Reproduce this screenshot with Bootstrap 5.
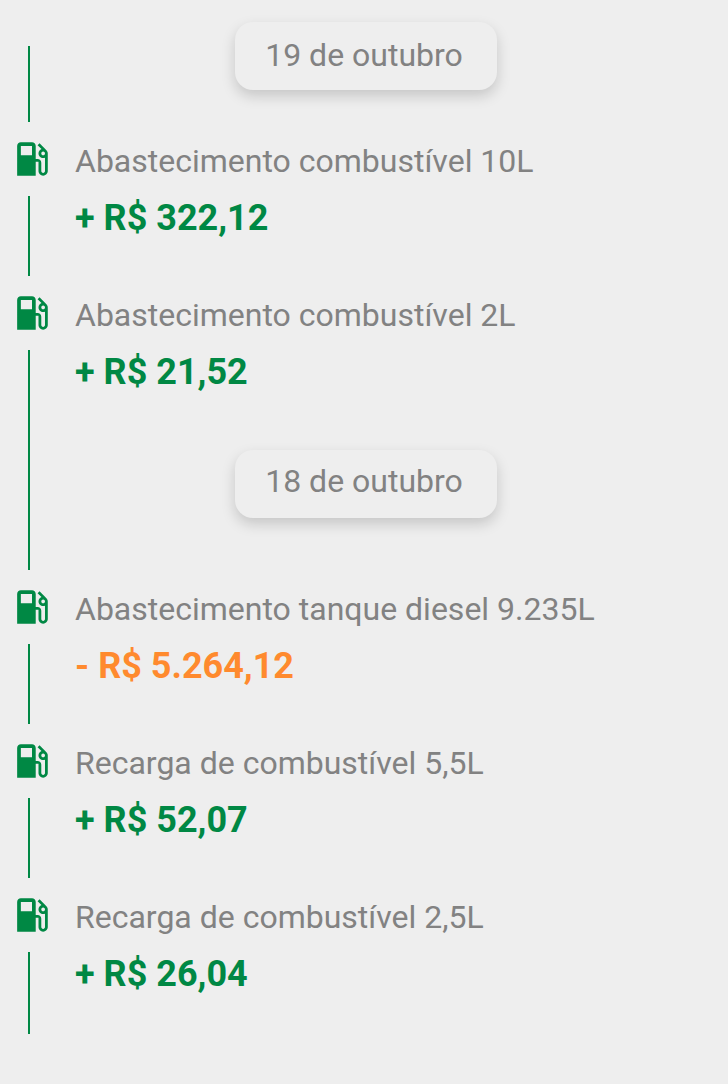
<!DOCTYPE html>
<html lang="pt-BR">
<head>
<meta charset="utf-8">
<meta name="viewport" content="width=device-width, initial-scale=1">
<title>Extrato</title>
<link href="https://cdn.jsdelivr.net/npm/bootstrap@5.3.0/dist/css/bootstrap.min.css" rel="stylesheet">
<style>
  body { background: #eee; font-family: Roboto, "Liberation Sans", sans-serif; color: #828282; }
  .rail { width: 75px; flex: none; padding-left: 10px; }
  .rail svg { display: block; width: 44px; height: 44px; margin: 15px 0; fill: #008844; }
  .line { width: 2px; margin-left: 18px; background: #008844; }
  .first { height: 122px; }
  .first .line { margin-top: 46px; }
  .entry { height: 154px; }
  .entry.with-date { height: 294px; }
  .entry.last { height: 156px; }
  .label { font-size: 32px; line-height: 40px; margin-top: 19px; white-space: nowrap; }
  .amount { font-size: 36px; line-height: 44px; margin-top: 15px; font-weight: 700; color: #008844; white-space: nowrap; }
  .amount.debit { color: #ff8a2e; }
  .date { width: 262px; height: 68px; margin-left: 160px; padding-right: 4px; border-radius: 18px; font-size: 32px; line-height: 66px; background: #eee; box-shadow: 0 6px 14px rgba(0,0,0,.17); }
  .first .date { margin-top: 22px; }
  .with-date .date { margin-top: 56px; line-height: 62px; }
</style>
</head>
<body>
<svg class="d-none" aria-hidden="true"><symbol id="pump" viewBox="0.15 0.15 23.7 23.7"><path d="M19.77 7.23l.01-.01-3.72-3.72L15 4.56l2.11 2.11c-.94.36-1.61 1.26-1.61 2.33 0 1.38 1.12 2.5 2.5 2.5.36 0 .69-.08 1-.21v7.21c0 .55-.45 1-1 1s-1-.45-1-1V14c0-1.1-.9-2-2-2h-1V5c0-1.1-.9-2-2-2H6c-1.1 0-2 .9-2 2v16h10v-7.5h1.5v5c0 1.38 1.12 2.5 2.5 2.5s2.5-1.12 2.5-2.5V9c0-.69-.28-1.32-.73-1.77zM12 10H6V5h6v5zm6 0c-.55 0-1-.45-1-1s.45-1 1-1 1 .45 1 1-.45 1-1 1z"/></symbol></svg>
<ul class="list-unstyled mb-0">
  <li class="first d-flex">
    <div class="rail d-flex flex-column"><div class="line flex-grow-1"></div></div>
    <div><div class="date text-center">19 de outubro</div></div>
  </li>
  <li class="entry d-flex">
    <div class="rail d-flex flex-column"><svg><use href="#pump"/></svg><div class="line flex-grow-1"></div></div>
    <div><div class="label">Abastecimento combustível 10L</div><div class="amount">+ R$ 322,12</div></div>
  </li>
  <li class="entry with-date d-flex">
    <div class="rail d-flex flex-column"><svg><use href="#pump"/></svg><div class="line flex-grow-1"></div></div>
    <div><div class="label">Abastecimento combustível 2L</div><div class="amount">+ R$ 21,52</div><div class="date text-center">18 de outubro</div></div>
  </li>
  <li class="entry d-flex">
    <div class="rail d-flex flex-column"><svg><use href="#pump"/></svg><div class="line flex-grow-1"></div></div>
    <div><div class="label">Abastecimento tanque diesel 9.235L</div><div class="amount debit">- R$ 5.264,12</div></div>
  </li>
  <li class="entry d-flex">
    <div class="rail d-flex flex-column"><svg><use href="#pump"/></svg><div class="line flex-grow-1"></div></div>
    <div><div class="label">Recarga de combustível 5,5L</div><div class="amount">+ R$ 52,07</div></div>
  </li>
  <li class="entry last d-flex">
    <div class="rail d-flex flex-column"><svg><use href="#pump"/></svg><div class="line flex-grow-1"></div></div>
    <div><div class="label">Recarga de combustível 2,5L</div><div class="amount">+ R$ 26,04</div></div>
  </li>
</ul>
<script src="https://cdn.jsdelivr.net/npm/bootstrap@5.3.0/dist/js/bootstrap.bundle.min.js"></script>
</body>
</html>
